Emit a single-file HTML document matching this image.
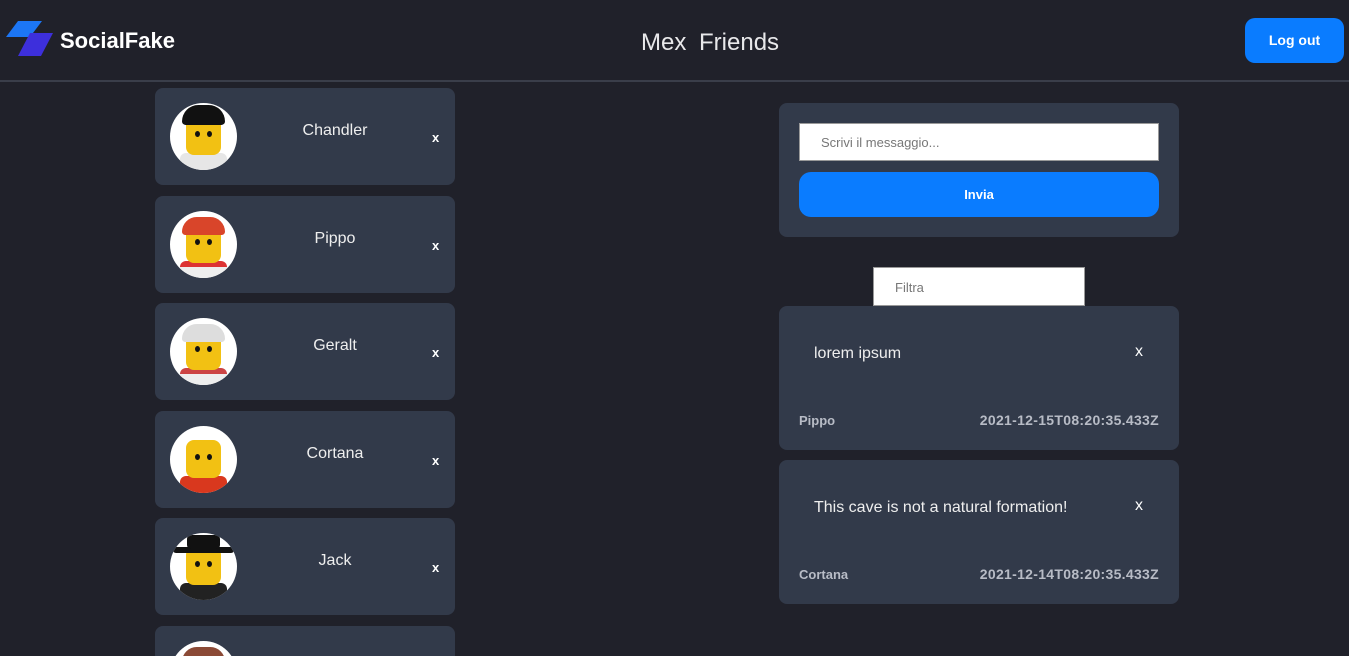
<!DOCTYPE html>
<html style="height:656px;overflow:hidden"><head><meta charset="utf-8"><style>
*{box-sizing:border-box;margin:0;padding:0}
body{width:1349px;height:656px;overflow:hidden;background:#20212a;font-family:"Liberation Sans",sans-serif;color:#fff;position:relative}
.hdr{position:absolute;left:0;top:0;width:1349px;height:82px;border-bottom:2px solid #3a3e4a}
.logo{position:absolute;left:60px;top:28px;font-weight:bold;font-size:22px}
.nav{position:absolute;left:641px;top:29px;font-size:24px;color:#e8e8ea;word-spacing:6px}
.logout{position:absolute;left:1245px;top:18px;width:99px;height:45px;background:#0a7cff;border-radius:10px;font-weight:bold;font-size:14px;text-align:center;line-height:45px}
.card{position:absolute;left:155px;width:300px;height:97px;background:#323a4a;border-radius:8px;overflow:hidden}
.av{position:absolute;left:15px;top:15px;width:67px;height:67px;border-radius:50%;background:#fff;overflow:hidden}
.face{position:absolute;left:16px;top:14px;width:35px;height:38px;background:#f2c113;border-radius:8px}
.face:before,.face:after{content:"";position:absolute;top:14px;width:5px;height:6px;background:#111;border-radius:50%}
.face:before{left:9px}.face:after{right:9px}
.body{position:absolute;left:10px;top:50px;width:47px;height:20px;border-radius:6px 6px 0 0}
.hat{position:absolute;left:12px;top:6px;width:43px;height:18px;border-radius:18px 18px 4px 4px}
.nm{position:absolute;left:0;width:360px;text-align:center;top:34px;font-size:16px;color:#eee}
.x{position:absolute;left:277px;top:42px;font-size:13px;font-weight:bold}
.box{position:absolute;left:779px;width:400px;background:#323a4a;border-radius:8px}
.inp{position:absolute;background:#fff;border:1px solid #999;color:#777;font-size:13px}
.msg{font-size:16px;color:#eee;position:absolute;left:35px}
.mx{position:absolute;left:356px;font-size:16px}
.who{position:absolute;left:20px;font-weight:bold;font-size:13px;color:#b8bcc6}
.dt{position:absolute;right:20px;font-weight:bold;font-size:14px;letter-spacing:0.3px;color:#b8bcc6}
</style></head><body>
<div class="hdr">
<svg style="position:absolute;left:6px;top:21px" width="48" height="36"><polygon points="12,0 36,0 24,16 0,16" fill="#1c76f5"/><polygon points="24,12 47,12 35,35 12,35" fill="#3d2fdc"/></svg>
<div class="logo">SocialFake</div>
<div class="nav">Mex Friends</div>
<div class="logout">Log out</div>
</div>

<div class="card" style="top:88px"><div class="av"><div class="body" style="background:#e6e6e6"></div><div class="face"></div><div class="hat" style="background:#111;top:2px;height:20px"></div></div><div class="nm">Chandler</div><div class="x">x</div></div>
<div class="card" style="top:196px"><div class="av"><div class="body" style="background:#eee;border-top:6px solid #d33"></div><div class="face"></div><div class="hat" style="background:#d9452a"></div></div><div class="nm">Pippo</div><div class="x">x</div></div>
<div class="card" style="top:303px"><div class="av"><div class="body" style="background:#eee;border-top:6px solid #c44"></div><div class="face"></div><div class="hat" style="background:#ddd"></div></div><div class="nm">Geralt</div><div class="x">x</div></div>
<div class="card" style="top:411px"><div class="av"><div class="body" style="background:#d9381e"></div><div class="face"></div></div><div class="nm">Cortana</div><div class="x">x</div></div>
<div class="card" style="top:518px"><div class="av"><div class="body" style="background:#222"></div><div class="face"></div><div class="hat" style="background:#111;left:3px;width:61px;top:14px;height:6px;border-radius:3px"></div><div class="hat" style="background:#111;left:17px;width:33px;top:2px;height:14px;border-radius:4px"></div></div><div class="nm">Jack</div><div class="x">x</div></div>
<div class="card" style="top:626px;height:30px;border-radius:8px 8px 0 0"><div class="av"><div class="hat" style="background:#8b4a36"></div></div></div>

<div class="box" style="top:103px;height:134px">
<div class="inp" style="left:20px;top:20px;width:360px;height:38px;padding:11px 21px">Scrivi il messaggio...</div>
<div style="position:absolute;left:20px;top:69px;width:360px;height:45px;background:#0a7cff;border-radius:12px;text-align:center;line-height:45px;font-weight:bold;font-size:13px">Invia</div>
</div>
<div class="inp" style="left:873px;top:267px;width:212px;height:39px;padding:12px 21px">Filtra</div>
<div class="box" style="top:306px;height:144px"><div class="msg" style="top:39px">lorem ipsum</div><div class="mx" style="top:37px">x</div><div class="who" style="top:107px">Pippo</div><div class="dt" style="top:106px">2021-12-15T08:20:35.433Z</div></div>
<div class="box" style="top:460px;height:144px"><div class="msg" style="top:39px">This cave is not a natural formation!</div><div class="mx" style="top:37px">x</div><div class="who" style="top:107px">Cortana</div><div class="dt" style="top:106px">2021-12-14T08:20:35.433Z</div></div>
</body></html>
